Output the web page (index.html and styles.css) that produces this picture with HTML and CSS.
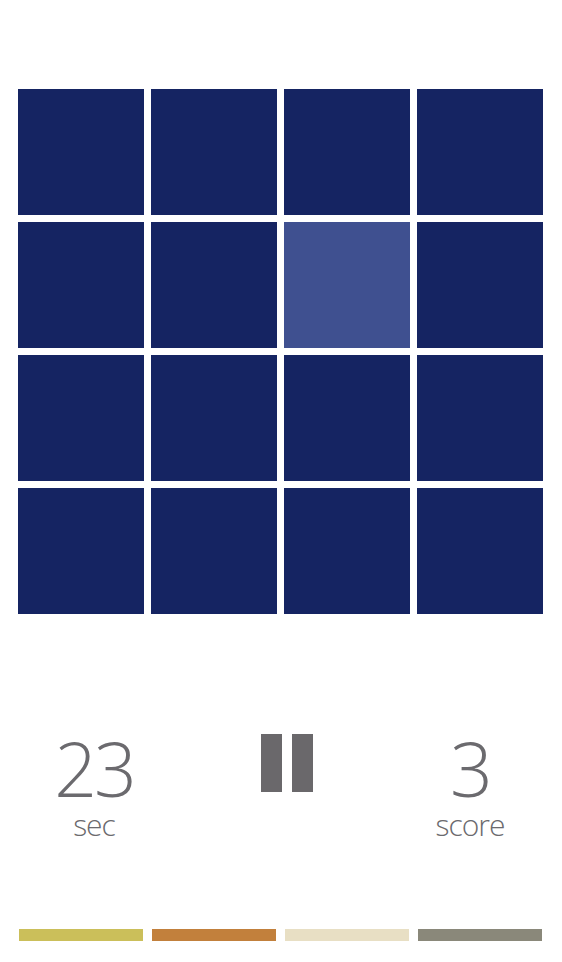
FILE: index.html
```html
<!DOCTYPE html>
<html lang="en">
  <head>
    <meta charset="UTF-8" />
    <meta name="viewport" content="width=device-width, initial-scale=1.0" />
    <title>Tiles</title>
    <link rel="stylesheet" href="styles.css">
  </head>
  <body>
    <div class="game">
      <!-- Tile board -->
      <div class="board">
        <div class="tile"></div>
        <div class="tile"></div>
        <div class="tile"></div>
        <div class="tile"></div>
        <div class="tile"></div>
        <div class="tile"></div>
        <div class="tile lit"></div>
        <div class="tile"></div>
        <div class="tile"></div>
        <div class="tile"></div>
        <div class="tile"></div>
        <div class="tile"></div>
        <div class="tile"></div>
        <div class="tile"></div>
        <div class="tile"></div>
        <div class="tile"></div>
      </div>

      <!-- Timer, pause, score -->
      <div class="status">
        <div class="stat">
          <div class="stat-value">23</div>
          <div class="stat-label">sec</div>
        </div>
        <div class="pause">
          <span></span>
          <span></span>
        </div>
        <div class="stat">
          <div class="stat-value">3</div>
          <div class="stat-label">score</div>
        </div>
      </div>

      <!-- Colour strip -->
      <div class="bars">
        <div class="bar yellow"></div>
        <div class="bar orange"></div>
        <div class="bar cream"></div>
        <div class="bar grey"></div>
      </div>
    </div>
  </body>
</html>
```

FILE: styles.css
```css
body {
  margin: 0;
  background-color: #ffffff;
  font-family: "Open Sans", "Noto Sans", sans-serif;
  color: #6b6a6e;
}

.game {
  width: 562px;
  height: 962px;
  overflow: hidden;
}

.board {
  display: grid;
  grid-template-columns: repeat(4, 126px);
  grid-auto-rows: 126px;
  gap: 7px;
  margin: 89px 0 0 18px;
}

.tile {
  background-color: #152462;
}

.tile.lit {
  background-color: #3f5090;
}

.status {
  display: grid;
  grid-template-columns: 188px 188px 188px;
  margin-top: 114px;
}

.stat {
  text-align: center;
}

.stat-value {
  font-size: 75px;
  font-weight: 300;
  line-height: 80px;
  letter-spacing: -3px;
}

.stat-label {
  font-size: 30px;
  font-weight: 300;
  line-height: 34px;
  letter-spacing: -1px;
}

.pause {
  display: flex;
  justify-content: center;
  align-items: flex-start;
  gap: 10px;
  padding: 6px 0 0 10px;
}

.pause span {
  width: 21px;
  height: 58px;
  background-color: #6a686b;
}

.bars {
  display: grid;
  grid-template-columns: repeat(4, 124px);
  gap: 9px;
  margin: 87px 0 0 19px;
}

.bar {
  height: 12px;
}

.yellow {
  background-color: #cbbf5a;
}

.orange {
  background-color: #c2803c;
}

.cream {
  background-color: #e8dfc4;
}

.grey {
  background-color: #8a887a;
}
```
